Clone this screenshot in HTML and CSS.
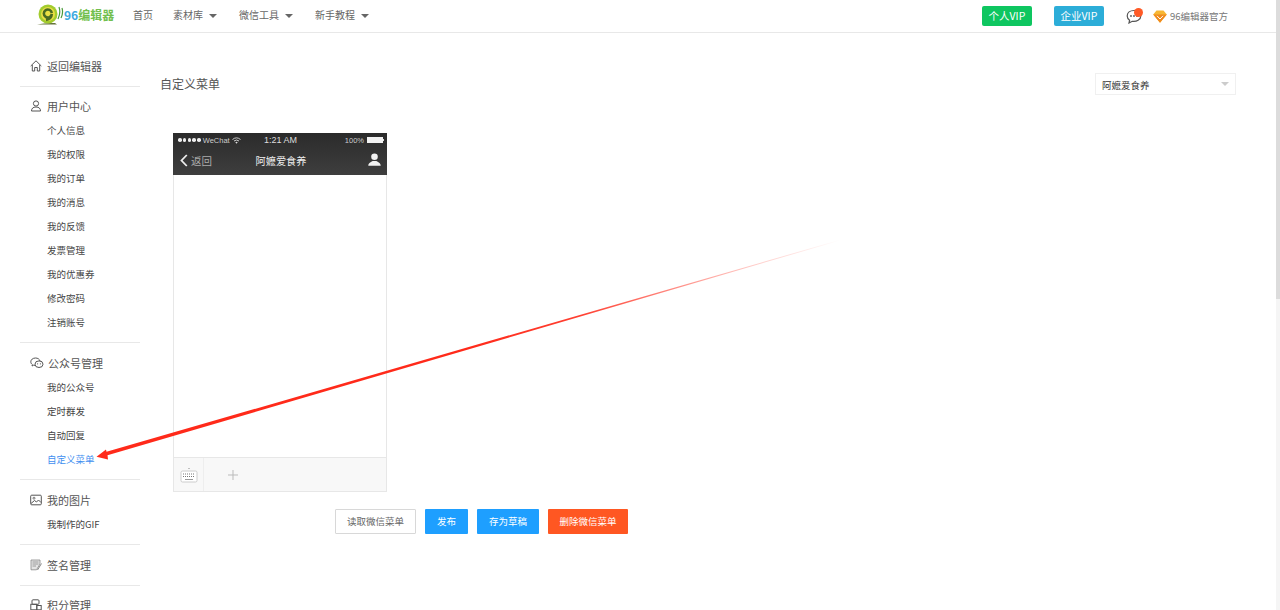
FILE: index.html
```html
<!DOCTYPE html>
<html lang="zh-CN">
<head>
    <meta charset="UTF-8">
    <meta name="viewport" content="width=device-width, initial-scale=1.0">
    <title>自定义菜单</title>
    <link rel="stylesheet" href="styles.css">
</head>
<body>
<div class="page">
    <header class="topbar">
        <div class="logo">
            <svg class="logo-mark" width="27" height="21" viewBox="0 0 27 21">
                <path d="M0 20.500 Q8 18.500 18 19 L20 20.500 Z" fill="#66753a"/>
                <circle cx="11" cy="10" r="9.500" fill="#a3cc2e"/>
                <circle cx="11" cy="10" r="7" fill="#e9df45"/>
                <path d="M14.800 9 A4 4 0 1 0 14.800 10 Q14.500 15 9 16" fill="none" stroke="#4a6a22" stroke-width="2.600"/>
                <circle cx="11" cy="9" r="1.500" fill="#e9df45"/>
                <path d="M21 15 Q24 9 22 3 M24 14 Q26.500 9 25 4" fill="none" stroke="#4a9a3a" stroke-width="1.200"/>
            </svg>
            <span class="logo-num">96</span><span class="logo-name">编辑器</span>
        </div>
        <nav class="topnav">
            <a href="#">首页</a>
            <a href="#" class="has-caret">素材库</a>
            <a href="#" class="has-caret">微信工具</a>
            <a href="#" class="has-caret">新手教程</a>
        </nav>
        <div class="topright">
            <a href="#" class="vip vip-green">个人VIP</a>
            <a href="#" class="vip vip-blue">企业VIP</a>
            <span class="msg">
                <svg width="16" height="15" viewBox="0 0 16 15">
                    <path d="M8 1.500 C4 1.500 1.200 3.800 1.200 7 C1.200 8.800 2.200 10.200 3.600 11.200 L3 14 L6.200 12.300 C10.500 13 14.800 10.800 14.800 7 C14.800 3.800 12 1.500 8 1.500 Z" fill="none" stroke="#555" stroke-width="1.200"/>
                    <circle cx="5" cy="7" r="0.900" fill="#555"/><circle cx="8" cy="7" r="0.900" fill="#555"/><circle cx="11" cy="7" r="0.900" fill="#555"/>
                </svg>
                <i class="msg-dot"></i>
            </span>
            <span class="official">
                <svg width="14" height="13" viewBox="0 0 14 13">
                    <path d="M3.500 0.500 H10.500 L13.800 4.500 L7 12.800 L0.200 4.500 Z" fill="#f7b733"/>
                    <path d="M0.200 4.500 H13.800 L7 12.800 Z" fill="#f08a1d"/>
                    <path d="M4 5.800 L7 9 L10 5.800" fill="none" stroke="#fff" stroke-width="1"/>
                </svg>
                96编辑器官方
            </span>
        </div>
    </header>

    <div class="content">
        <aside class="sidebar">
            <section class="side-group">
                <a href="#" class="side-head">
                    <svg class="side-icon" viewBox="0 0 12 12"><path d="M0.700 6 L6 0.800 L11.300 6 M2.300 5 V11 H4.700 V7.500 H7.300 V11 H9.700 V5" fill="none" stroke="#555" stroke-width="1"/></svg>
                    返回编辑器
                </a>
            </section>
            <section class="side-group roomy">
                <a href="#" class="side-head">
                    <svg class="side-icon" viewBox="0 0 12 12"><circle cx="6" cy="3.500" r="2.600" fill="none" stroke="#555"/><path d="M1.500 11 C1.500 8.500 3 7 6 7 C9 7 10.500 8.500 10.500 11 Z" fill="none" stroke="#555"/></svg>
                    用户中心
                </a>
                <a href="#" class="side-item">个人信息</a>
                <a href="#" class="side-item">我的权限</a>
                <a href="#" class="side-item">我的订单</a>
                <a href="#" class="side-item">我的消息</a>
                <a href="#" class="side-item">我的反馈</a>
                <a href="#" class="side-item">发票管理</a>
                <a href="#" class="side-item">我的优惠券</a>
                <a href="#" class="side-item">修改密码</a>
                <a href="#" class="side-item">注销账号</a>
            </section>
            <section class="side-group roomy">
                <a href="#" class="side-head">
                    <svg class="side-icon icon-wide" viewBox="0 0 14 12"><path d="M5.500 1 C2.800 1 0.800 2.700 0.800 4.800 C0.800 6 1.400 6.900 2.400 7.600 L2 9 L3.600 8.200 C4 8.300 4.500 8.400 5 8.400" fill="none" stroke="#555"/><path d="M5.500 1 C7.800 1 9.600 2.200 10 4" fill="none" stroke="#555"/><ellipse cx="9" cy="7.200" rx="4" ry="3.300" fill="none" stroke="#555"/><circle cx="7.600" cy="6.800" r="0.600" fill="#555"/><circle cx="10.400" cy="6.800" r="0.600" fill="#555"/></svg>
                    公众号管理
                </a>
                <a href="#" class="side-item">我的公众号</a>
                <a href="#" class="side-item">定时群发</a>
                <a href="#" class="side-item">自动回复</a>
                <a href="#" class="side-item active">自定义菜单</a>
            </section>
            <section class="side-group roomy">
                <a href="#" class="side-head">
                    <svg class="side-icon" viewBox="0 0 12 12"><rect x="0.700" y="1.200" width="10.600" height="9.600" rx="1" fill="none" stroke="#555"/><circle cx="4" cy="4.200" r="1" fill="none" stroke="#555" stroke-width="0.800"/><path d="M1 9.500 L4.500 6.500 L6.500 8 L8.500 6 L11 8.500" fill="none" stroke="#555"/></svg>
                    我的图片
                </a>
                <a href="#" class="side-item">我制作的GIF</a>
            </section>
            <section class="side-group">
                <a href="#" class="side-head">
                    <svg class="side-icon" viewBox="0 0 12 12"><path d="M1 1 H10 V5 L6.500 10.800 H1 Z" fill="#e4e4e4" stroke="#888" stroke-width="0.800"/><path d="M2.500 3 H8.500 M2.500 5 H8.500 M2.500 7 H6" stroke="#888" stroke-width="0.800"/><path d="M11.500 4.500 L7.500 11" stroke="#888"/></svg>
                    签名管理
                </a>
            </section>
            <section class="side-group">
                <a href="#" class="side-head">
                    <svg class="side-icon" viewBox="0 0 12 12"><rect x="2" y="0.800" width="7" height="4.500" rx="1" fill="none" stroke="#555"/><rect x="0.800" y="5.300" width="6" height="5.500" fill="none" stroke="#555"/><rect x="6.800" y="6.500" width="4.400" height="4.300" fill="none" stroke="#555"/></svg>
                    积分管理
                </a>
            </section>
        </aside>

        <main class="main">
            <div class="main-top">
                <h2 class="main-title">自定义菜单</h2>
                <div class="account-select">阿嬷爱食养</div>
            </div>

            <div class="phone">
                <div class="phone-head">
                    <div class="status">
                        <span class="status-left">
                            <span class="signal"><i></i><i></i><i></i><i></i><i></i></span>
                            WeChat
                            <svg width="9" height="7" viewBox="0 0 9 7"><path d="M0.500 2.500 Q4.500 -0.800 8.500 2.500 M2 4 Q4.500 2 7 4" fill="none" stroke="#ddd" stroke-width="0.900"/><path d="M3.300 5.200 L4.500 6.800 L5.700 5.200 Q4.500 4.400 3.300 5.200 Z" fill="#ddd"/></svg>
                        </span>
                        <span class="status-time">1:21 AM</span>
                        <span class="status-right">100% <i class="battery"></i></span>
                    </div>
                    <div class="phone-nav">
                        <span class="phone-back">
                            <svg width="8" height="13" viewBox="0 0 8 13"><path d="M6.800 1 L1.500 6.500 L6.800 12" fill="none" stroke="#eee" stroke-width="1.800"/></svg>
                            返回
                        </span>
                        <span class="phone-title">阿嬷爱食养</span>
                        <svg class="phone-user" width="13" height="13" viewBox="0 0 13 13"><circle cx="6.500" cy="3.800" r="3.300" fill="#f2f2f2"/><path d="M0.300 12.800 C0.300 9.800 3 9 4.800 8 H8.200 C10 9 12.700 9.800 12.700 12.800 Z" fill="#f2f2f2"/></svg>
                    </div>
                </div>
                <div class="phone-body"></div>
                <div class="phone-foot">
                    <div class="foot-keyboard">
                        <svg width="18" height="16" viewBox="0 0 18 16">
                            <path d="M8 2 L9 1 L10 2 Z" fill="#888"/>
                            <rect x="1" y="4" width="16" height="11" rx="1.500" fill="#fff" stroke="#ccc"/>
                            <path d="M3 7 H15 M3 9.500 H15" stroke="#777" stroke-width="1.200" stroke-dasharray="1 1"/>
                            <path d="M5 12.500 H13" stroke="#999"/>
                        </svg>
                    </div>
                    <div class="foot-add">
                        <svg width="10" height="10" viewBox="0 0 10 10"><path d="M5 0 V10 M0 5 H10" stroke="#bbb" stroke-width="1"/></svg>
                    </div>
                </div>
            </div>

            <div class="actions">
                <a href="#" class="btn btn-plain">读取微信菜单</a>
                <a href="#" class="btn btn-blue">发布</a>
                <a href="#" class="btn btn-blue">存为草稿</a>
                <a href="#" class="btn btn-orange">删除微信菜单</a>
            </div>
        </main>
    </div>
</div>

<div class="scrollbar"><div class="scroll-thumb"></div></div>

<!-- annotation arrow drawn over the screenshot -->
<svg class="arrow" width="1280" height="610" viewBox="0 0 1280 610">
    <defs>
        <linearGradient id="arrowFade" gradientUnits="userSpaceOnUse" x1="840" y1="240" x2="97" y2="457">
            <stop offset="0" stop-color="#ff2a1a" stop-opacity="0"/>
            <stop offset="0.120" stop-color="#ff2a1a" stop-opacity="0.250"/>
            <stop offset="0.350" stop-color="#ff2a1a" stop-opacity="0.900"/>
            <stop offset="0.500" stop-color="#ff2a1a"/>
            <stop offset="1" stop-color="#ff2a1a"/>
        </linearGradient>
    </defs>
    <polygon points="840,239.700 840,240.500 107.500,455.200 108,459.500 96.500,456.800 106,449.500 106.500,451.800" fill="url(#arrowFade)"/>
</svg>
</body>
</html>
```

FILE: styles.css
```css
* {
    box-sizing: border-box;
}

html, body {
    height: 100%;
}

body {
    margin: 0;
    display: flex;
    overflow: hidden;
    background-color: #fff;
    color: #333;
    font-family: "Noto Sans CJK SC", "Noto Sans", sans-serif;
}

a {
    color: inherit;
    text-decoration: none;
}

.page {
    flex: 1;
    min-width: 0;
    display: flex;
    flex-direction: column;
}

/* top bar */
.topbar {
    height: 33px;
    flex-shrink: 0;
    display: flex;
    align-items: center;
    padding: 0 48px 0 37px;
    border-bottom: 1px solid #e8e8e8;
}

.logo {
    display: flex;
    align-items: center;
    width: 96px;
    margin-bottom: 3px;
    font-size: 12px;
    font-weight: 700;
}

.logo-num {
    color: #3ea9df;
}

.logo-name {
    color: #72bf4e;
}

.topnav {
    display: flex;
    gap: 20px;
    margin-bottom: 4px;
    font-size: 10px;
    color: #666;
}

.has-caret {
    padding-right: 2px;
}

.has-caret::after {
    content: "";
    display: inline-block;
    margin-left: 6px;
    vertical-align: 1px;
    border-left: 4px solid transparent;
    border-right: 4px solid transparent;
    border-top: 4px solid #666;
}

.topright {
    margin-left: auto;
    display: flex;
    align-items: center;
}

.vip {
    width: 50px;
    height: 20px;
    line-height: 20px;
    text-align: center;
    color: #fff;
    font-size: 10.500px;
    border-radius: 2px;
}

.vip-green {
    background-color: #0ec660;
    margin-right: 22px;
}

.vip-blue {
    background-color: #2cadd8;
    margin-right: 22px;
}

.msg {
    position: relative;
    display: flex;
    margin-right: 11px;
}

.msg-dot {
    position: absolute;
    top: -1px;
    right: -1px;
    width: 9px;
    height: 9px;
    border-radius: 50%;
    background-color: #ff5a26;
}

.official {
    display: flex;
    align-items: center;
    gap: 3px;
    font-size: 9.500px;
    color: #777;
}

/* left menu + main */
.content {
    flex: 1;
    display: flex;
    min-height: 0;
}

.sidebar {
    width: 120px;
    margin-left: 20px;
    flex-shrink: 0;
    padding-top: 21px;
}

.side-group {
    padding-bottom: 8px;
    margin-bottom: 7px;
    border-bottom: 1px solid #e8e8e8;
}

.side-group.roomy {
    margin-bottom: 8px;
}

.side-group:last-child {
    border-bottom: none;
}

.side-head {
    display: flex;
    align-items: center;
    height: 24px;
    padding-left: 10px;
    font-size: 11px;
    line-height: 1;
    color: #555;
}

.side-icon {
    width: 12px;
    height: 12px;
    margin-right: 5px;
}

.icon-wide {
    width: 14px;
    margin-right: 4px;
}

.side-item {
    display: block;
    height: 24px;
    line-height: 24px;
    padding-left: 27px;
    font-size: 9.500px;
    color: #444;
}

.side-item.active {
    color: #3f8ff0;
}

.main {
    flex: 1;
    min-width: 0;
    padding: 40px 40px 0 20px;
}

.main-top {
    display: flex;
    justify-content: space-between;
    align-items: center;
    height: 22px;
}

.main-title {
    margin: 0 0 2px;
    font-size: 12px;
    font-weight: 400;
    color: #555;
}

.account-select {
    position: relative;
    width: 141px;
    height: 22px;
    line-height: 22px;
    padding-left: 6px;
    font-size: 9.500px;
    color: #333;
    border: 1px solid #f0f0f0;
}

.account-select::after {
    content: "";
    position: absolute;
    right: 6px;
    top: 8px;
    border-left: 4px solid transparent;
    border-right: 4px solid transparent;
    border-top: 4px solid #ccc;
}

/* phone preview */
.phone {
    width: 214px;
    height: 359px;
    margin: 38px 0 0 13px;
    display: flex;
    flex-direction: column;
    border: 1px solid #e7e7e7;
    border-top: none;
}

.phone-head {
    height: 42px;
    margin: 0 -1px;
    background: linear-gradient(#2b2b2b, #3e3e3e);
    color: #eee;
}

.status {
    height: 14px;
    display: flex;
    align-items: center;
    justify-content: space-between;
    padding: 0 4px 0 5px;
    font-family: "Liberation Sans", sans-serif;
    font-size: 7.500px;
    color: #ccc;
}

.status-left, .status-right {
    width: 80px;
    display: flex;
    align-items: center;
    gap: 2px;
}

.status-right {
    justify-content: flex-end;
}

.status-time {
    font-size: 9px;
    color: #ddd;
}

.signal {
    display: flex;
    gap: 1.300px;
}

.signal i {
    width: 3.500px;
    height: 3.500px;
    border-radius: 50%;
    background-color: #eee;
}

.battery {
    position: relative;
    width: 16px;
    height: 6px;
    background-color: #f2f2f2;
    margin-left: 1px;
}

.battery::after {
    content: "";
    position: absolute;
    right: -1px;
    top: 2px;
    width: 1px;
    height: 2px;
    background-color: #ddd;
}

.phone-nav {
    height: 28px;
    display: flex;
    align-items: center;
    justify-content: space-between;
    padding: 0 6px 2px 7px;
}

.phone-back {
    display: flex;
    align-items: center;
    gap: 3px;
    font-size: 10.500px;
    color: #aaa;
}

.phone-title {
    margin-left: -18px;
    font-size: 10.200px;
    color: #eee;
}

.phone-user {
    margin-top: -2px;
}

.phone-body {
    flex: 1;
    background-color: #fff;
}

.phone-foot {
    height: 34px;
    display: flex;
    background-color: #f8f8f8;
    border-top: 1px solid #e7e7e7;
}

.foot-keyboard {
    width: 30px;
    display: flex;
    align-items: center;
    justify-content: center;
    border-right: 1px solid #eee;
}

.foot-add {
    flex: 1;
    display: flex;
    align-items: center;
    padding-left: 24px;
}

/* buttons */
.actions {
    display: flex;
    gap: 9px;
    margin: 17px 0 0 175px;
}

.btn {
    height: 25px;
    line-height: 25px;
    text-align: center;
    font-size: 9.500px;
    color: #fff;
    border-radius: 1px;
}

.btn-plain {
    width: 81px;
    line-height: 23px;
    color: #666;
    background-color: #fff;
    border: 1px solid #d8d8d8;
}

.btn-blue {
    padding: 0 12px;
    background-color: #1e9fff;
}

.btn-orange {
    width: 80px;
    background-color: #ff5722;
}

/* thin page scrollbar */
.scrollbar {
    width: 4px;
    flex-shrink: 0;
    background-color: #f5f5f5;
}

.scroll-thumb {
    height: 299px;
    background-color: #dcdcdc;
}

.arrow {
    position: absolute;
    left: 0;
    top: 0;
    pointer-events: none;
}
```
